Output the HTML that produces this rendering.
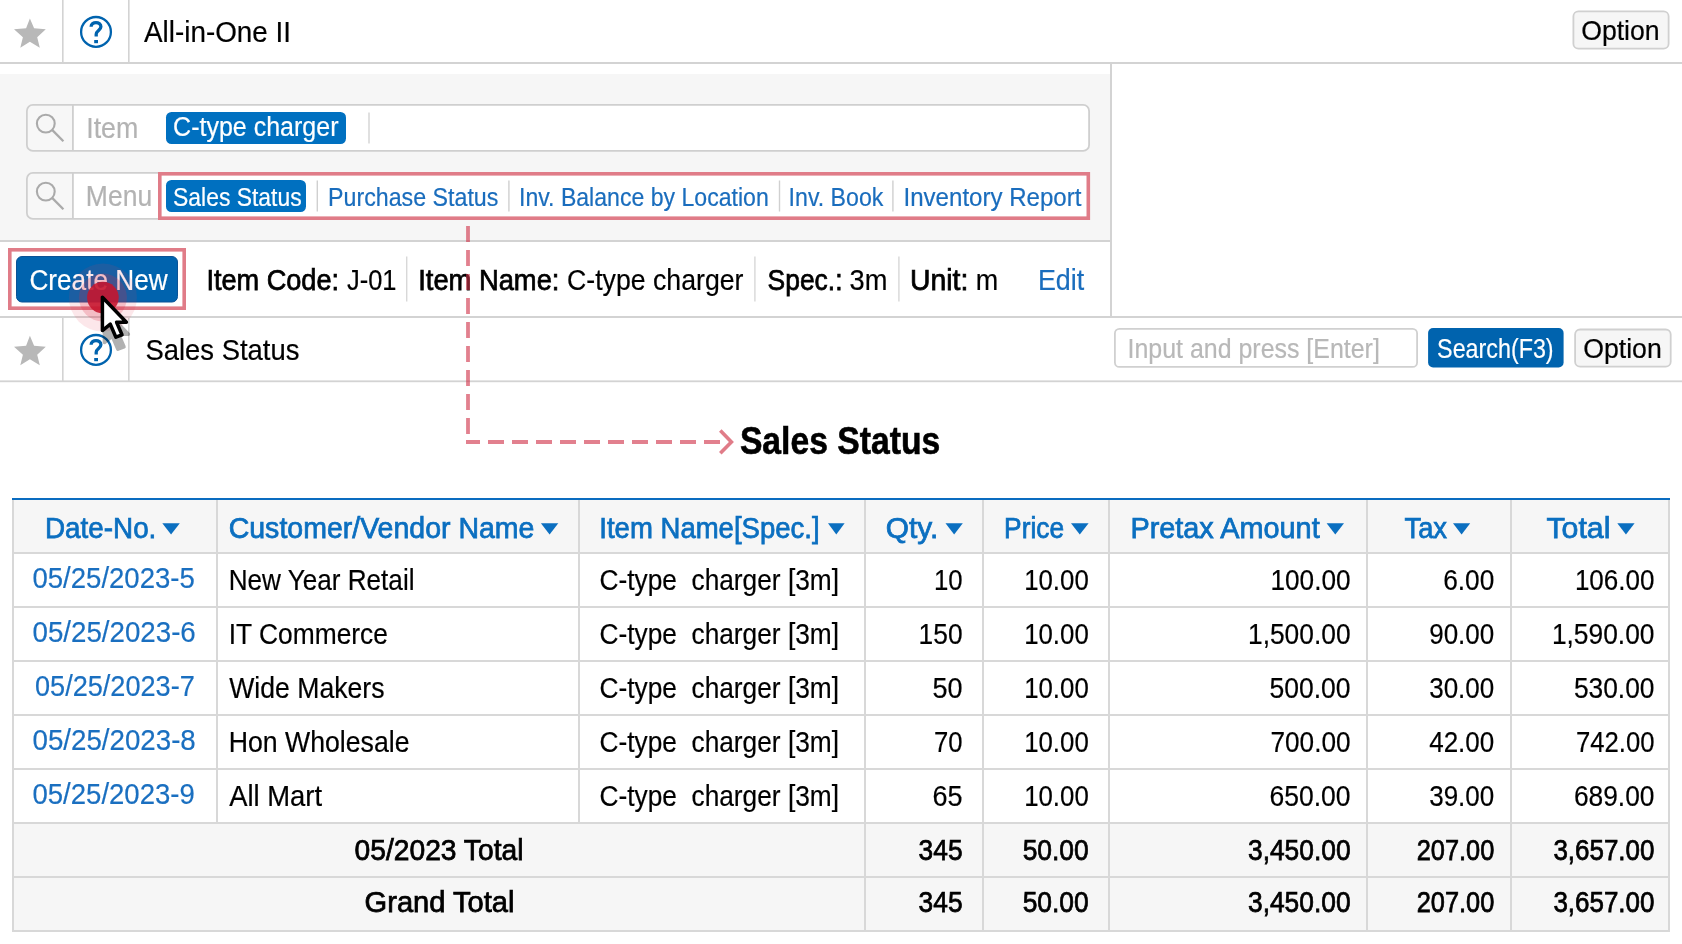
<!DOCTYPE html>
<html><head><meta charset="utf-8"><title>All-in-One II</title>
<style>
html,body{margin:0;padding:0;background:#fff;width:1682px;height:944px;overflow:hidden}
svg{display:block;will-change:transform}
text{font-family:"Liberation Sans",sans-serif;white-space:pre}
</style></head><body>
<svg width="1682" height="944" viewBox="0 0 1682 944"><rect x="0" y="0" width="1682" height="944" fill="#ffffff"/><polygon points="29.90,18.40 34.10,28.30 45.80,29.30 37.20,37.30 39.80,47.80 29.90,41.80 20.30,47.80 22.90,37.30 14.00,29.30 26.10,28.30" fill="#b8b8b8"/><rect x="62" y="0" width="1.6" height="62" fill="#d3d3d3"/><rect x="128" y="0" width="1.6" height="62" fill="#d3d3d3"/><circle cx="96" cy="31.9" r="14.9" fill="none" stroke="#0063ae" stroke-width="2.3"/><path d="M91.1,26.8 C91.1,21.1 100.9,21.1 100.9,26.8 C100.9,30.2 96.2,30.8 96.2,34.2 V36.6" fill="none" stroke="#0063ae" stroke-width="3.3"/><rect x="94.2" y="40" width="3.8" height="3.2" fill="#0063ae"/><text x="144.00" y="42.00" font-size="30" fill="#000" stroke="#000" stroke-width="0.2" textLength="146.98" lengthAdjust="spacingAndGlyphs">All-in-One II</text><rect x="1573.4" y="11.3" width="95.2" height="37.4" rx="5" fill="#f6f6f6" stroke="#d0d0d0" stroke-width="1.8"/><text x="1581.20" y="40.00" font-size="28" fill="#000" stroke="#000" stroke-width="0.2" textLength="78.44" lengthAdjust="spacingAndGlyphs">Option</text><rect x="0" y="62" width="1682" height="2" fill="#d3d3d3"/><rect x="0" y="74" width="1110" height="166" fill="#f6f6f6"/><rect x="1110" y="64" width="2" height="254" fill="#d3d3d3"/><rect x="0" y="240" width="1110" height="2" fill="#d3d3d3"/><rect x="26.9" y="104.9" width="1062.2" height="46" rx="6" fill="#ffffff"/><path d="M27.8,110.5 a5.6,5.6 0 0 1 5.6,-5.6 H72 V151 H33.4 a5.6,5.6 0 0 1 -5.6,-5.6 Z" fill="#f7f7f7"/><rect x="26.9" y="104.9" width="1062.2" height="46" rx="6" fill="none" stroke="#cfcfcf" stroke-width="1.8"/><rect x="72" y="105" width="1.8" height="46" fill="#cfcfcf"/><circle cx="45.8" cy="123.6" r="8.9" fill="none" stroke="#aaaaaa" stroke-width="2.1"/><line x1="52.099999999999994" y1="129.9" x2="63.4" y2="141.2" stroke="#aaaaaa" stroke-width="2.3"/><text x="86.20" y="138.20" font-size="29" fill="#b3b3b3" stroke="#b3b3b3" stroke-width="0.2" textLength="52.10" lengthAdjust="spacingAndGlyphs">Item</text><rect x="166" y="112" width="180" height="32" rx="5.5" fill="#0070c0"/><text x="173.10" y="136.30" font-size="27" fill="#ffffff" stroke="#ffffff" stroke-width="0.2" textLength="165.37" lengthAdjust="spacingAndGlyphs">C-type charger</text><rect x="368.4" y="112.5" width="1.2" height="31" fill="#cccccc"/><rect x="26.9" y="172.9" width="1062.2" height="46" rx="6" fill="#ffffff"/><path d="M27.8,178.5 a5.6,5.6 0 0 1 5.6,-5.6 H72 V219 H33.4 a5.6,5.6 0 0 1 -5.6,-5.6 Z" fill="#f7f7f7"/><rect x="26.9" y="172.9" width="1062.2" height="46" rx="6" fill="none" stroke="#cfcfcf" stroke-width="1.8"/><rect x="72" y="173" width="1.8" height="46" fill="#cfcfcf"/><circle cx="45.8" cy="191.6" r="8.9" fill="none" stroke="#aaaaaa" stroke-width="2.1"/><line x1="52.099999999999994" y1="197.9" x2="63.4" y2="209.2" stroke="#aaaaaa" stroke-width="2.3"/><text x="85.80" y="205.60" font-size="29" fill="#b3b3b3" stroke="#b3b3b3" stroke-width="0.2" textLength="66.34" lengthAdjust="spacingAndGlyphs">Menu</text><rect x="159.8" y="173.8" width="928.5" height="44.4" fill="#ffffff" stroke="#e07c88" stroke-width="3.6"/><rect x="166" y="180" width="140" height="32" rx="5.5" fill="#0070c0"/><text x="173.10" y="206.20" font-size="26" fill="#ffffff" stroke="#ffffff" stroke-width="0.2" textLength="128.49" lengthAdjust="spacingAndGlyphs">Sales Status</text><rect x="316.59999999999997" y="180.5" width="1.4" height="31" fill="#d0d0d0"/><rect x="508.2" y="180.5" width="1.4" height="31" fill="#d0d0d0"/><rect x="778.8" y="180.5" width="1.4" height="31" fill="#d0d0d0"/><rect x="892.1999999999999" y="180.5" width="1.4" height="31" fill="#d0d0d0"/><text x="328.10" y="206.00" font-size="25" fill="#1a6dbd" stroke="#1a6dbd" stroke-width="0.2" textLength="170.24" lengthAdjust="spacingAndGlyphs">Purchase Status</text><text x="519.00" y="206.00" font-size="25" fill="#1a6dbd" stroke="#1a6dbd" stroke-width="0.2" textLength="249.75" lengthAdjust="spacingAndGlyphs">Inv. Balance by Location</text><text x="788.60" y="206.00" font-size="25" fill="#1a6dbd" stroke="#1a6dbd" stroke-width="0.2" textLength="94.78" lengthAdjust="spacingAndGlyphs">Inv. Book</text><text x="903.50" y="206.00" font-size="25" fill="#1a6dbd" stroke="#1a6dbd" stroke-width="0.2" textLength="177.95" lengthAdjust="spacingAndGlyphs">Inventory Report</text><rect x="9.8" y="249.8" width="174.4" height="58.4" fill="none" stroke="#e07c88" stroke-width="3.6"/><rect x="16.5" y="256.5" width="161" height="45.5" rx="5.5" fill="#0063ae" stroke="#0a5296" stroke-width="1"/><text x="29.40" y="289.60" font-size="30" fill="#ffffff" stroke="#ffffff" stroke-width="0.2" textLength="138.37" lengthAdjust="spacingAndGlyphs">Create New</text><text x="206.40" y="290.00" font-size="30" fill="#000" stroke="#000" stroke-width="0.75" textLength="132.63" lengthAdjust="spacingAndGlyphs">Item Code:</text><text x="347.00" y="290.00" font-size="30" fill="#000" stroke="#000" stroke-width="0.2" textLength="49.51" lengthAdjust="spacingAndGlyphs">J-01</text><rect x="406" y="256.5" width="1.4" height="45" fill="#d8d8d8"/><text x="418.20" y="290.00" font-size="30" fill="#000" stroke="#000" stroke-width="0.75" textLength="141.25" lengthAdjust="spacingAndGlyphs">Item Name:</text><text x="567.00" y="290.00" font-size="30" fill="#000" stroke="#000" stroke-width="0.2" textLength="176.47" lengthAdjust="spacingAndGlyphs">C-type charger</text><rect x="754.2" y="256.5" width="1.4" height="45" fill="#d8d8d8"/><text x="767.60" y="290.00" font-size="30" fill="#000" stroke="#000" stroke-width="0.75" textLength="74.90" lengthAdjust="spacingAndGlyphs">Spec.:</text><text x="849.50" y="290.00" font-size="30" fill="#000" stroke="#000" stroke-width="0.2" textLength="37.88" lengthAdjust="spacingAndGlyphs">3m</text><rect x="898.2" y="256.5" width="1.4" height="45" fill="#d8d8d8"/><text x="910.00" y="290.00" font-size="30" fill="#000" stroke="#000" stroke-width="0.75" textLength="58.33" lengthAdjust="spacingAndGlyphs">Unit:</text><text x="975.80" y="290.00" font-size="30" fill="#000" stroke="#000" stroke-width="0.2" textLength="22.45" lengthAdjust="spacingAndGlyphs">m</text><text x="1037.90" y="290.00" font-size="30" fill="#1a6dbd" stroke="#1a6dbd" stroke-width="0.2" textLength="46.35" lengthAdjust="spacingAndGlyphs">Edit</text><rect x="0" y="316" width="1682" height="2" fill="#d3d3d3"/><polygon points="29.90,335.80 34.10,345.70 45.80,346.70 37.20,354.70 39.80,365.20 29.90,359.20 20.30,365.20 22.90,354.70 14.00,346.70 26.10,345.70" fill="#b8b8b8"/><rect x="62" y="318" width="1.6" height="63" fill="#d3d3d3"/><rect x="128" y="318" width="1.6" height="63" fill="#d3d3d3"/><circle cx="96" cy="349.9" r="14.9" fill="none" stroke="#0063ae" stroke-width="2.3"/><path d="M91.1,344.8 C91.1,339.1 100.9,339.1 100.9,344.8 C100.9,348.2 96.2,348.8 96.2,352.2 V354.6" fill="none" stroke="#0063ae" stroke-width="3.3"/><rect x="94.2" y="358" width="3.8" height="3.2" fill="#0063ae"/><text x="145.50" y="359.80" font-size="29" fill="#000" stroke="#000" stroke-width="0.2" textLength="153.88" lengthAdjust="spacingAndGlyphs">Sales Status</text><rect x="1114.9" y="328.9" width="302.2" height="38" rx="4.5" fill="#ffffff" stroke="#d0d0d0" stroke-width="1.8"/><text x="1127.50" y="357.60" font-size="27.5" fill="#b8b8b8" stroke="#b8b8b8" stroke-width="0.2" textLength="252.36" lengthAdjust="spacingAndGlyphs">Input and press [Enter]</text><rect x="1428.1" y="328.1" width="135.5" height="39.4" rx="5" fill="#0063ae"/><text x="1437.10" y="357.80" font-size="27.5" fill="#ffffff" stroke="#ffffff" stroke-width="0.2" textLength="116.54" lengthAdjust="spacingAndGlyphs">Search(F3)</text><rect x="1575.1" y="329.5" width="95.6" height="37.2" rx="5" fill="#f6f6f6" stroke="#d0d0d0" stroke-width="1.8"/><text x="1583.20" y="357.80" font-size="27" fill="#000" stroke="#000" stroke-width="0.2" textLength="78.54" lengthAdjust="spacingAndGlyphs">Option</text><rect x="0" y="380.4" width="1682" height="1.8" fill="#d3d3d3"/><path d="M468,226 V441" fill="none" stroke="rgba(208,50,72,0.62)" stroke-width="3.8" stroke-dasharray="16 8"/><path d="M466,442 H721" fill="none" stroke="rgba(208,50,72,0.62)" stroke-width="3.8" stroke-dasharray="16 8" stroke-dashoffset="2"/><path d="M720.3,430.6 L731.4,441.9 L720.3,453.2" fill="none" stroke="#e07c88" stroke-width="3.6"/><text x="739.90" y="454.10" font-size="38.5" font-weight="700" fill="#000" stroke="#000" stroke-width="0.6" textLength="200.42" lengthAdjust="spacingAndGlyphs">Sales Status</text><rect x="12" y="498" width="1658" height="2" fill="#0a6cc0"/><rect x="12" y="500" width="1658" height="53" fill="#f6f6f6"/><rect x="12" y="822" width="1658" height="109" fill="#f6f6f6"/><rect x="12" y="552" width="1658" height="2" fill="#d8d8d8"/><rect x="12" y="606" width="1658" height="2" fill="#d8d8d8"/><rect x="12" y="660" width="1658" height="2" fill="#d8d8d8"/><rect x="12" y="714" width="1658" height="2" fill="#d8d8d8"/><rect x="12" y="768" width="1658" height="2" fill="#d8d8d8"/><rect x="12" y="822" width="1658" height="2" fill="#d8d8d8"/><rect x="12" y="876" width="1658" height="2" fill="#d8d8d8"/><rect x="12" y="930" width="1658" height="2" fill="#d8d8d8"/><rect x="12" y="500" width="2" height="431" fill="#d8d8d8"/><rect x="216" y="500" width="2" height="322" fill="#d8d8d8"/><rect x="578" y="500" width="2" height="322" fill="#d8d8d8"/><rect x="864" y="500" width="2" height="431" fill="#d8d8d8"/><rect x="982" y="500" width="2" height="431" fill="#d8d8d8"/><rect x="1108" y="500" width="2" height="431" fill="#d8d8d8"/><rect x="1366" y="500" width="2" height="431" fill="#d8d8d8"/><rect x="1510" y="500" width="2" height="431" fill="#d8d8d8"/><rect x="1668" y="500" width="2" height="431" fill="#d8d8d8"/><text x="45.00" y="538.00" font-size="29" fill="#0b6fc0" stroke="#0b6fc0" stroke-width="0.75" textLength="111.34" lengthAdjust="spacingAndGlyphs">Date-No.</text><polygon points="162.3,523.3 179.8,523.3 171.05,534.6" fill="#0b6fc0"/><text x="228.70" y="538.00" font-size="29" fill="#0b6fc0" stroke="#0b6fc0" stroke-width="0.75" textLength="305.77" lengthAdjust="spacingAndGlyphs">Customer/Vendor Name</text><polygon points="540.9,523.3 558.3,523.3 549.5999999999999,534.6" fill="#0b6fc0"/><text x="599.30" y="538.00" font-size="29" fill="#0b6fc0" stroke="#0b6fc0" stroke-width="0.75" textLength="220.35" lengthAdjust="spacingAndGlyphs">Item Name[Spec.]</text><polygon points="828,523.3 844.6,523.3 836.3,534.6" fill="#0b6fc0"/><text x="885.70" y="538.00" font-size="29" fill="#0b6fc0" stroke="#0b6fc0" stroke-width="0.75" textLength="52.58" lengthAdjust="spacingAndGlyphs">Qty.</text><polygon points="945.5,523.3 962.8,523.3 954.15,534.6" fill="#0b6fc0"/><text x="1004.10" y="538.00" font-size="29" fill="#0b6fc0" stroke="#0b6fc0" stroke-width="0.75" textLength="59.96" lengthAdjust="spacingAndGlyphs">Price</text><polygon points="1071,523.3 1088.6,523.3 1079.8,534.6" fill="#0b6fc0"/><text x="1130.40" y="538.00" font-size="29" fill="#0b6fc0" stroke="#0b6fc0" stroke-width="0.75" textLength="189.28" lengthAdjust="spacingAndGlyphs">Pretax Amount</text><polygon points="1326.6,523.3 1344,523.3 1335.3,534.6" fill="#0b6fc0"/><text x="1404.50" y="538.00" font-size="29" fill="#0b6fc0" stroke="#0b6fc0" stroke-width="0.75" textLength="42.53" lengthAdjust="spacingAndGlyphs">Tax</text><polygon points="1453,523.3 1470.2,523.3 1461.6,534.6" fill="#0b6fc0"/><text x="1546.40" y="538.00" font-size="29" fill="#0b6fc0" stroke="#0b6fc0" stroke-width="0.75" textLength="64.07" lengthAdjust="spacingAndGlyphs">Total</text><polygon points="1617.3,523.3 1634.6,523.3 1625.9499999999998,534.6" fill="#0b6fc0"/><text x="32.50" y="587.90" font-size="29" fill="#1a6fc0" stroke="#1a6fc0" stroke-width="0.2" textLength="162.28" lengthAdjust="spacingAndGlyphs">05/25/2023-5</text><text x="228.70" y="590.30" font-size="29" fill="#000" stroke="#000" stroke-width="0.2" textLength="185.81" lengthAdjust="spacingAndGlyphs">New Year Retail</text><text x="599.50" y="590.30" font-size="29" fill="#000" stroke="#000" stroke-width="0.2" textLength="239.49" lengthAdjust="spacingAndGlyphs">C-type  charger [3m]</text><text x="934.00" y="590.30" font-size="29" fill="#000" stroke="#000" stroke-width="0.2" textLength="28.66" lengthAdjust="spacingAndGlyphs">10</text><text x="1024.20" y="590.30" font-size="29" fill="#000" stroke="#000" stroke-width="0.2" textLength="64.54" lengthAdjust="spacingAndGlyphs">10.00</text><text x="1270.50" y="590.30" font-size="29" fill="#000" stroke="#000" stroke-width="0.2" textLength="80.07" lengthAdjust="spacingAndGlyphs">100.00</text><text x="1443.20" y="590.30" font-size="29" fill="#000" stroke="#000" stroke-width="0.2" textLength="51.13" lengthAdjust="spacingAndGlyphs">6.00</text><text x="1574.90" y="590.30" font-size="29" fill="#000" stroke="#000" stroke-width="0.2" textLength="79.57" lengthAdjust="spacingAndGlyphs">106.00</text><text x="32.50" y="641.90" font-size="29" fill="#1a6fc0" stroke="#1a6fc0" stroke-width="0.2" textLength="163.28" lengthAdjust="spacingAndGlyphs">05/25/2023-6</text><text x="228.70" y="644.30" font-size="29" fill="#000" stroke="#000" stroke-width="0.2" textLength="159.25" lengthAdjust="spacingAndGlyphs">IT Commerce</text><text x="599.50" y="644.30" font-size="29" fill="#000" stroke="#000" stroke-width="0.2" textLength="239.49" lengthAdjust="spacingAndGlyphs">C-type  charger [3m]</text><text x="918.60" y="644.30" font-size="29" fill="#000" stroke="#000" stroke-width="0.2" textLength="43.96" lengthAdjust="spacingAndGlyphs">150</text><text x="1024.20" y="644.30" font-size="29" fill="#000" stroke="#000" stroke-width="0.2" textLength="64.54" lengthAdjust="spacingAndGlyphs">10.00</text><text x="1248.00" y="644.30" font-size="29" fill="#000" stroke="#000" stroke-width="0.2" textLength="102.54" lengthAdjust="spacingAndGlyphs">1,500.00</text><text x="1429.20" y="644.30" font-size="29" fill="#000" stroke="#000" stroke-width="0.2" textLength="65.04" lengthAdjust="spacingAndGlyphs">90.00</text><text x="1551.90" y="644.30" font-size="29" fill="#000" stroke="#000" stroke-width="0.2" textLength="102.54" lengthAdjust="spacingAndGlyphs">1,590.00</text><text x="35.00" y="695.90" font-size="29" fill="#1a6fc0" stroke="#1a6fc0" stroke-width="0.2" textLength="159.78" lengthAdjust="spacingAndGlyphs">05/25/2023-7</text><text x="229.20" y="698.30" font-size="29" fill="#000" stroke="#000" stroke-width="0.2" textLength="155.29" lengthAdjust="spacingAndGlyphs">Wide Makers</text><text x="599.50" y="698.30" font-size="29" fill="#000" stroke="#000" stroke-width="0.2" textLength="239.49" lengthAdjust="spacingAndGlyphs">C-type  charger [3m]</text><text x="932.60" y="698.30" font-size="29" fill="#000" stroke="#000" stroke-width="0.2" textLength="30.06" lengthAdjust="spacingAndGlyphs">50</text><text x="1024.20" y="698.30" font-size="29" fill="#000" stroke="#000" stroke-width="0.2" textLength="64.54" lengthAdjust="spacingAndGlyphs">10.00</text><text x="1269.50" y="698.30" font-size="29" fill="#000" stroke="#000" stroke-width="0.2" textLength="81.06" lengthAdjust="spacingAndGlyphs">500.00</text><text x="1429.20" y="698.30" font-size="29" fill="#000" stroke="#000" stroke-width="0.2" textLength="65.04" lengthAdjust="spacingAndGlyphs">30.00</text><text x="1573.90" y="698.30" font-size="29" fill="#000" stroke="#000" stroke-width="0.2" textLength="80.57" lengthAdjust="spacingAndGlyphs">530.00</text><text x="32.50" y="749.90" font-size="29" fill="#1a6fc0" stroke="#1a6fc0" stroke-width="0.2" textLength="163.28" lengthAdjust="spacingAndGlyphs">05/25/2023-8</text><text x="228.70" y="752.30" font-size="29" fill="#000" stroke="#000" stroke-width="0.2" textLength="180.84" lengthAdjust="spacingAndGlyphs">Hon Wholesale</text><text x="599.50" y="752.30" font-size="29" fill="#000" stroke="#000" stroke-width="0.2" textLength="239.49" lengthAdjust="spacingAndGlyphs">C-type  charger [3m]</text><text x="934.10" y="752.30" font-size="29" fill="#000" stroke="#000" stroke-width="0.2" textLength="28.56" lengthAdjust="spacingAndGlyphs">70</text><text x="1024.20" y="752.30" font-size="29" fill="#000" stroke="#000" stroke-width="0.2" textLength="64.54" lengthAdjust="spacingAndGlyphs">10.00</text><text x="1270.50" y="752.30" font-size="29" fill="#000" stroke="#000" stroke-width="0.2" textLength="80.07" lengthAdjust="spacingAndGlyphs">700.00</text><text x="1429.20" y="752.30" font-size="29" fill="#000" stroke="#000" stroke-width="0.2" textLength="65.04" lengthAdjust="spacingAndGlyphs">42.00</text><text x="1575.90" y="752.30" font-size="29" fill="#000" stroke="#000" stroke-width="0.2" textLength="78.57" lengthAdjust="spacingAndGlyphs">742.00</text><text x="32.50" y="803.90" font-size="29" fill="#1a6fc0" stroke="#1a6fc0" stroke-width="0.2" textLength="162.28" lengthAdjust="spacingAndGlyphs">05/25/2023-9</text><text x="229.20" y="806.30" font-size="29" fill="#000" stroke="#000" stroke-width="0.2" textLength="92.88" lengthAdjust="spacingAndGlyphs">All Mart</text><text x="599.50" y="806.30" font-size="29" fill="#000" stroke="#000" stroke-width="0.2" textLength="239.49" lengthAdjust="spacingAndGlyphs">C-type  charger [3m]</text><text x="932.60" y="806.30" font-size="29" fill="#000" stroke="#000" stroke-width="0.2" textLength="30.06" lengthAdjust="spacingAndGlyphs">65</text><text x="1024.20" y="806.30" font-size="29" fill="#000" stroke="#000" stroke-width="0.2" textLength="64.54" lengthAdjust="spacingAndGlyphs">10.00</text><text x="1269.50" y="806.30" font-size="29" fill="#000" stroke="#000" stroke-width="0.2" textLength="81.06" lengthAdjust="spacingAndGlyphs">650.00</text><text x="1429.20" y="806.30" font-size="29" fill="#000" stroke="#000" stroke-width="0.2" textLength="65.04" lengthAdjust="spacingAndGlyphs">39.00</text><text x="1573.90" y="806.30" font-size="29" fill="#000" stroke="#000" stroke-width="0.2" textLength="80.57" lengthAdjust="spacingAndGlyphs">689.00</text><text x="354.60" y="860.00" font-size="29" fill="#000" stroke="#000" stroke-width="0.75" textLength="168.86" lengthAdjust="spacingAndGlyphs">05/2023 Total</text><text x="918.60" y="860.00" font-size="29" fill="#000" stroke="#000" stroke-width="0.75" textLength="43.96" lengthAdjust="spacingAndGlyphs">345</text><text x="1022.70" y="860.00" font-size="29" fill="#000" stroke="#000" stroke-width="0.75" textLength="66.03" lengthAdjust="spacingAndGlyphs">50.00</text><text x="1248.00" y="860.00" font-size="29" fill="#000" stroke="#000" stroke-width="0.75" textLength="102.54" lengthAdjust="spacingAndGlyphs">3,450.00</text><text x="1416.70" y="860.00" font-size="29" fill="#000" stroke="#000" stroke-width="0.75" textLength="77.57" lengthAdjust="spacingAndGlyphs">207.00</text><text x="1553.40" y="860.00" font-size="29" fill="#000" stroke="#000" stroke-width="0.75" textLength="101.04" lengthAdjust="spacingAndGlyphs">3,657.00</text><text x="364.60" y="912.20" font-size="29" fill="#000" stroke="#000" stroke-width="0.75" textLength="149.84" lengthAdjust="spacingAndGlyphs">Grand Total</text><text x="918.60" y="912.20" font-size="29" fill="#000" stroke="#000" stroke-width="0.75" textLength="43.96" lengthAdjust="spacingAndGlyphs">345</text><text x="1022.70" y="912.20" font-size="29" fill="#000" stroke="#000" stroke-width="0.75" textLength="66.03" lengthAdjust="spacingAndGlyphs">50.00</text><text x="1248.00" y="912.20" font-size="29" fill="#000" stroke="#000" stroke-width="0.75" textLength="102.54" lengthAdjust="spacingAndGlyphs">3,450.00</text><text x="1416.70" y="912.20" font-size="29" fill="#000" stroke="#000" stroke-width="0.75" textLength="77.57" lengthAdjust="spacingAndGlyphs">207.00</text><text x="1553.40" y="912.20" font-size="29" fill="#000" stroke="#000" stroke-width="0.75" textLength="101.04" lengthAdjust="spacingAndGlyphs">3,657.00</text><circle cx="102.9" cy="297.6" r="34" fill="rgba(230,60,80,0.12)"/><circle cx="102.9" cy="297.6" r="24" fill="rgba(220,40,70,0.22)"/><circle cx="102.9" cy="297.6" r="15.8" fill="rgba(198,20,45,0.88)"/><defs><filter id="blur" x="-50%" y="-50%" width="200%" height="200%"><feGaussianBlur stdDeviation="0.7"/></filter></defs><g opacity="0.3" filter="url(#blur)"><path d="M102.4,297.3 L102.4,330.6 L110.3,324.2 L115.9,337.2 L122,334.8 L116.6,322.2 L126.4,322.2 Z" transform="translate(2,12)" fill="#000" stroke="#000" stroke-width="3.5" stroke-linejoin="round"/></g><path d="M102.4,297.3 L102.4,330.6 L110.3,324.2 L115.9,337.2 L122,334.8 L116.6,322.2 L126.4,322.2 Z" fill="#ffffff" stroke="#000000" stroke-width="3.5" stroke-linejoin="round"/></svg>
</body></html>
